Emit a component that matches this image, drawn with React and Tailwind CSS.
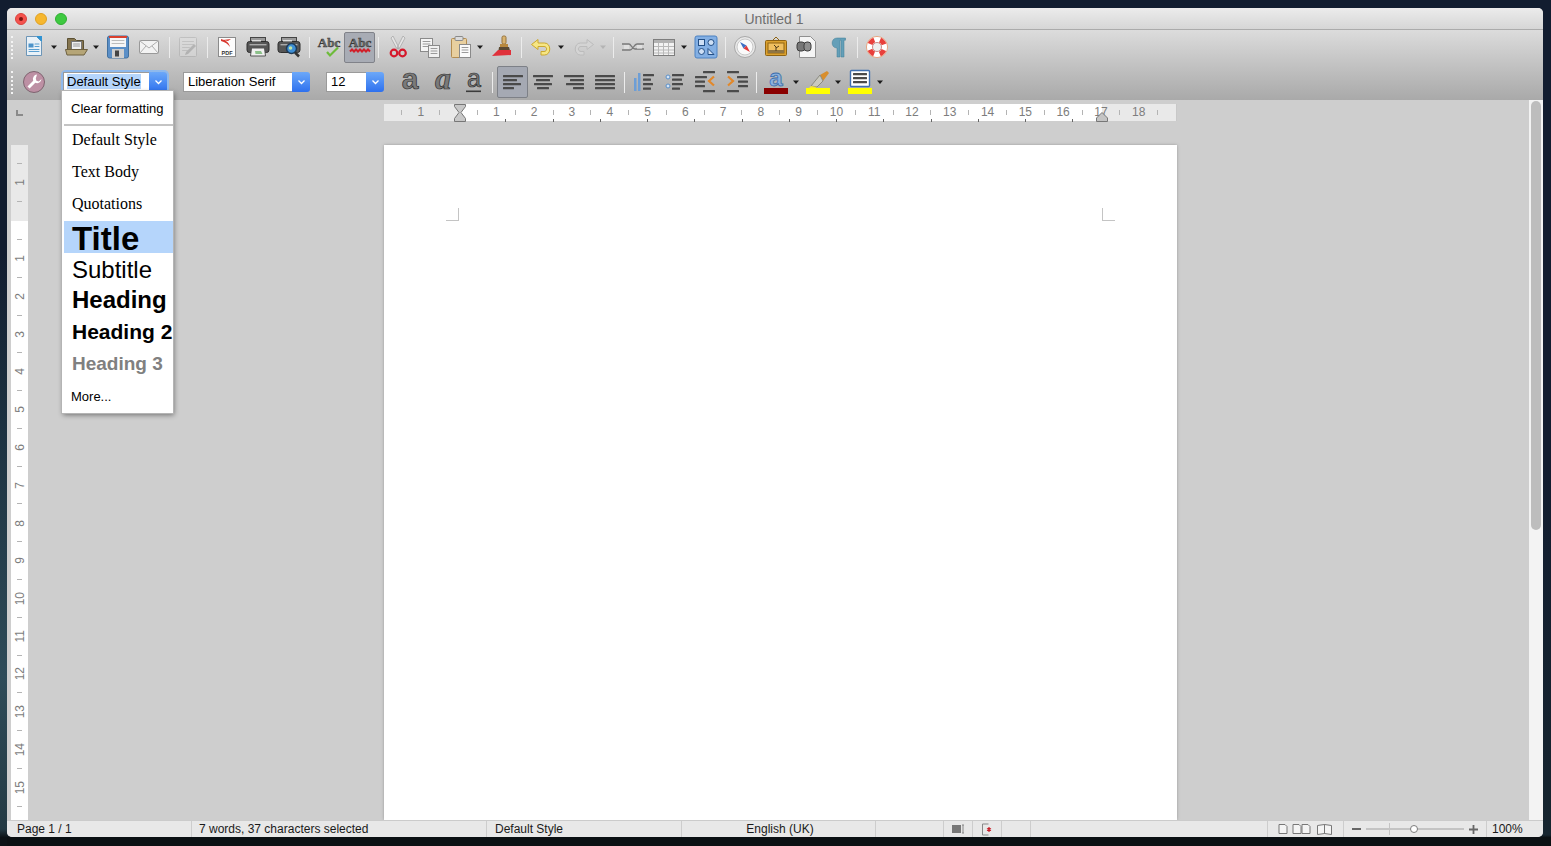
import React from "react";

const Ico = ({ c = "", children }) => (
  <svg width="24" height="24" viewBox="0 0 24 24" className={`shrink-0 overflow-visible ${c}`}>{children}</svg>
);
const Arrow = ({ c = "", grey }) => (
  <svg width="8" height="8" viewBox="0 0 8 8" className={`shrink-0 ${c}`}>
    <path d="M1 2.5h6L4 6z" fill={grey ? "#b4b4b4" : "#1c1c1c"} />
  </svg>
);
const Sep = ({ c = "" }) => <div className={`w-px h-[21px] shrink-0 bg-[#ececec] ${c}`} />;
const Grip = () => (
  <div className="ml-[4px] w-[3px] h-[23px] shrink-0 border-l-2 border-dotted border-[#f4f4f4]" />
);

const Doc = ({ x, y, w, h, f = "#fff", s = "#8a8a8a" }) => (
  <rect x={x} y={y} width={w} height={h} fill={f} stroke={s} />
);
const L = ({ items, fill = "#4a4a4a", h = 2.2 }) => (
  <>
    {items.map(([x, y, w], i) => (
      <rect key={i} x={x} y={y} width={w} height={h} fill={fill} rx="0.5" />
    ))}
  </>
);

const Abc = () => (
  <text x="12" y="12" textAnchor="middle" fontSize="13" fontWeight="700" fontFamily="Liberation Serif" fill="#6c6e6c" stroke="#383838" strokeWidth="0.5">Abc</text>
);

const New = ({ c }) => (
  <Ico c={c}>
    <path d="M4.5 1.5h10l5 5v14h-15z" fill="#e9f1f7" stroke="#6c95b7" />
    <path d="M14 1h6v6z" fill="#2f93d3" />
    <rect x="6.5" y="8.5" width="5" height="4" fill="#4d93c9" />
    <L fill="#5a9fd0" h="1" items={[[12.5, 8.5, 5], [12.5, 11, 5], [6.5, 14, 11], [6.5, 16, 11]]} />
  </Ico>
);
const Open = ({ c }) => (
  <Ico c={c}>
    <path d="M3.5 3.5h7l2 2h7v10h-16z" fill="#85754f" stroke="#5b5033" />
    <rect x="7.5" y="6.5" width="10" height="8" fill="#efefef" stroke="#777" />
    <L fill="#999" h="1" items={[[9, 8.5, 7], [9, 10.5, 7]]} />
    <path d="M1.5 14.5h22l-3.5 5.5H3z" fill="#b5a577" stroke="#6d6040" />
  </Ico>
);
const Save = ({ c }) => (
  <Ico c={c}>
    <rect x="1.5" y="1" width="21" height="22" rx="2" fill="#5b8fc7" stroke="#41709f" />
    <rect x="3" y="1" width="18" height="2" fill="#d9402e" />
    <rect x="4" y="3" width="16" height="9" fill="#f6f6f6" />
    <L fill="#bcbcbc" h="1" items={[[5.5, 5, 13], [5.5, 8, 13]]} />
    <rect x="6" y="14" width="12" height="9" fill="#cfcfcf" />
    <rect x="9" y="15.5" width="4" height="6" fill="#444" />
  </Ico>
);
const Mail = ({ c }) => (
  <Ico c={c}>
    <rect x="2.5" y="5.5" width="19" height="13" rx="1" fill="#f3f3f3" stroke="#999" />
    <path d="M3 6l9 7 9-7M3 18l6-7M21 18l-6-7" fill="none" stroke="#aeaeae" />
  </Ico>
);
const Edit = ({ c }) => (
  <Ico c={c}>
    <g opacity="0.3">
      <rect x="3.5" y="2.5" width="17" height="19" rx="1" fill="#e8e8e8" stroke="#8f8f8f" />
      <L fill="#a0a0a0" h="1" items={[[6, 6, 12], [6, 9, 12], [6, 12, 8], [6, 15, 6]]} />
      <path d="M10 17l8-8 2 2-8 8-3 1z" fill="#777" />
    </g>
  </Ico>
);
const Pdf = ({ c }) => (
  <Ico c={c}>
    <rect x="3.5" y="2.5" width="17" height="19" fill="#fdfdfd" stroke="#8b8b8b" />
    <path d="M6 4c4 1 8 3 9 8-2-3-5-5-9-6zM8 5l8-1-3 2z" fill="#d8372d" />
    <text x="12" y="19.5" textAnchor="middle" fontSize="5.5" fontWeight="700" fontFamily="Liberation Sans" fill="#333">PDF</text>
  </Ico>
);
const Printer = () => (
  <>
    <rect x="4.5" y="2.5" width="15" height="6" fill="#9a9a9a" stroke="#444" />
    <rect x="1" y="6.5" width="22" height="11" rx="2.5" fill="#555" stroke="#2e2e2e" />
    <rect x="6" y="5" width="9" height="1.5" fill="#ddd" />
    <rect x="3.5" y="9" width="17" height="1.4" fill="#aaa" />
  </>
);
const Print = ({ c }) => (
  <Ico c={c}>
    <Printer />
    <path d="M5.5 13h13l1 8h-15z" fill="#f0f0f0" stroke="#555" />
    <path d="M9 16h6l1.5 3h-7z" fill="#8cc18a" />
  </Ico>
);
const Preview = ({ c }) => (
  <Ico c={c}>
    <Printer />
    <circle cx="14.5" cy="13.5" r="5" fill="#3e8ed4" stroke="#1f3a55" strokeWidth="1.5" />
    <circle cx="13.5" cy="13" r="1.8" fill="#bfe5a8" />
    <path d="M18 17.5l4 4" stroke="#333" strokeWidth="2.5" />
  </Ico>
);
const Spell = ({ c }) => (
  <Ico c={c}>
    <Abc />
    <path d="M10 17l3 3.5 8-8" fill="none" stroke="#6dbb3a" strokeWidth="2.2" />
  </Ico>
);
const AutoSpell = () => (
  <div className="ml-[3px] w-[31px] h-[31px] shrink-0 flex items-center justify-center rounded-[2px] bg-[#a8acb5] border border-[#808289]">
    <Ico>
      <Abc />
      <path d="M2 16.5l2-2 2 2 2-2 2 2 2-2 2 2 2-2 2 2 2-2 2 2" fill="none" stroke="#d11f2a" strokeWidth="2" />
    </Ico>
  </div>
);
const Scissors = ({ c }) => (
  <Ico c={c}>
    <path d="M7 1l6 12-2 1-6-11zM17 1l-6 12 2 1 6-11z" fill="#e4e4e4" stroke="#a2a2a2" strokeWidth="0.7" />
    <circle cx="8" cy="18" r="3.3" fill="none" stroke="#d5182b" strokeWidth="2.2" />
    <circle cx="16.5" cy="18" r="3.3" fill="none" stroke="#d5182b" strokeWidth="2.2" />
  </Ico>
);
const Copy = ({ c }) => (
  <Ico c={c}>
    <Doc x={3.5} y={3.5} w={12} h={13} f="#f5f5f5" />
    <L fill="#9a9a9a" h="1" items={[[5.5, 6, 8], [5.5, 8.5, 8], [5.5, 11, 6]]} />
    <Doc x={11.5} y={10.5} w={11} h={12} f="#f0f0f0" />
    <L fill="#9a9a9a" h="1" items={[[13.5, 13, 7], [13.5, 15.5, 7], [13.5, 18, 7]]} />
  </Ico>
);
const Paste = ({ c }) => (
  <Ico c={c}>
    <rect x="2.5" y="3.5" width="15" height="19" rx="1" fill="#e8cf9f" stroke="#b38c50" />
    <rect x="6" y="1.5" width="8" height="4" rx="1" fill="#dbdbdb" stroke="#8a8a8a" />
    <Doc x={10.5} y={9.5} w={11} h={13} f="#fafafa" />
    <L fill="#9a9a9a" h="1" items={[[12.5, 12, 7], [12.5, 14.5, 7], [12.5, 17, 7]]} />
  </Ico>
);
const Brush = ({ c }) => (
  <Ico c={c}>
    <rect x="11" y="1" width="4" height="8" rx="1.5" fill="#d9b36f" stroke="#94723a" />
    <rect x="9" y="9" width="8" height="3" fill="#b8893f" />
    <path d="M8 12h10l2 7H7z" fill="#5b4a33" />
    <path d="M1 21l6-6h13v5z" fill="#e0303a" />
  </Ico>
);
const UndoPath = "M9 4.5L2.5 9.5 9 14.5V11.5h6c3.5 0 3.5 5 0 5h-3v3.5h3.5c7 0 7-12 0-12H9z";
const Undo = ({ c }) => (
  <Ico c={c}>
    <path d={UndoPath} fill="#f6e684" stroke="#cba82e" />
  </Ico>
);
const Redo = ({ c }) => (
  <Ico c={c}>
    <path d={UndoPath} transform="matrix(-1 0 0 1 24 0)" fill="#d4d4d4" stroke="#bcbcbc" />
  </Ico>
);
const Link = ({ c }) => (
  <Ico c={c}>
    <path d="M1 9h7c2 0 3 5 6 5h9M1 15h8c3 0 4-6 7-6h7" fill="none" stroke="#7a7a7a" strokeWidth="1.3" />
    <path d="M3 11h5M3 13h5M16 11h5M16 13h5" fill="none" stroke="#f0f0f0" />
  </Ico>
);
const Table = ({ c }) => (
  <Ico c={c}>
    <rect x="1.5" y="4.5" width="21" height="16" fill="#f2f2f2" stroke="#7d7d7d" />
    <rect x="2" y="5" width="20" height="3" fill="#b2b2b2" />
    <path d="M2 11.5h20M2 15h20M2 18h20M6.5 8v12M11.5 8v12M16.5 8v12" stroke="#b8b8b8" fill="none" />
  </Ico>
);
const Shapes = ({ c }) => (
  <Ico c={c}>
    <rect x="1" y="1" width="22" height="22" rx="2" fill="#83afe3" stroke="#4d82c2" />
    <rect x="4.5" y="4.5" width="6" height="6" fill="#cfe0f5" stroke="#234f86" />
    <circle cx="17" cy="7.5" r="3" fill="#cfe0f5" stroke="#234f86" />
    <circle cx="7.5" cy="16.5" r="3" fill="#cfe0f5" stroke="#234f86" />
    <path d="M14 19.5v-6l6 6z" fill="#cfe0f5" stroke="#234f86" />
  </Ico>
);
const Compass = ({ c }) => (
  <Ico c={c}>
    <circle cx="12" cy="12" r="10.5" fill="#e8e8e8" stroke="#a8a8a8" />
    <circle cx="12" cy="12" r="8" fill="#fafafa" stroke="#c8c8c8" />
    <path d="M7 7l6.5 3.5-3 3z" fill="#3f6fc4" />
    <path d="M17 17l-6.5-3.5 3-3z" fill="#e23b3b" />
  </Ico>
);
const Gallery = ({ c }) => (
  <Ico c={c}>
    <path d="M8 6l4-4 4 4" fill="none" stroke="#8f6414" />
    <rect x="1.5" y="5.5" width="21" height="15" rx="1" fill="#dba12f" stroke="#8f6414" />
    <rect x="4" y="8" width="16" height="10" fill="#f0c060" stroke="#8f6414" />
    <path d="M4 15h16v3H4z" fill="#8f7442" />
    <path d="M12 16v-4l-2-2M12 13l3-2" fill="none" stroke="#4d3a1a" />
  </Ico>
);
const Data = ({ c }) => (
  <Ico c={c}>
    <path d="M5.5 1.5h11l5 5v16h-16z" fill="#f5f5f5" stroke="#909090" />
    <rect x="3" y="7" width="8" height="9" rx="3" fill="#777" stroke="#3e3e3e" />
    <rect x="10" y="7" width="7" height="9" rx="3" fill="#8f8f8f" stroke="#3e3e3e" />
  </Ico>
);
const Pilcrow = ({ c }) => (
  <Ico c={c}>
    <path d="M11 3H19.5v2.2H18V22h-3V5.2h-1V22h-3V13C4.5 13 4.5 3 11 3z" fill="#649fb8" stroke="#3f7c95" strokeWidth="0.5" />
  </Ico>
);
const Help = ({ c }) => (
  <Ico c={c}>
    <circle cx="12" cy="12" r="10.5" fill="#fbe9dd" stroke="#e8a27c" />
    <circle cx="12" cy="12" r="7.5" fill="none" stroke="#fff" strokeWidth="5" />
    <circle cx="12" cy="12" r="7.5" fill="none" stroke="#e8403c" strokeWidth="5" strokeDasharray="6 5.78" strokeDashoffset="3" transform="rotate(45 12 12)" />
    <circle cx="12" cy="12" r="4.5" fill="#eee" stroke="#c88" />
  </Ico>
);

const Wrench = ({ c }) => (
  <Ico c={c}>
    <circle cx="12" cy="12" r="10.5" fill="#bd90a4" stroke="#7e6470" />
    <path d="M15 4.5a4.5 4.5 0 0 0-3.8 6.2l-5.7 5.7 2.1 2.1 5.7-5.7A4.5 4.5 0 0 0 19.5 9l-2.7 2.4-2.4-.6-.6-2.4z" fill="#fff" />
  </Ico>
);
const LetterA = ({ c, fam = "Liberation Sans", style = "normal", under, w = "700", size = 30, y = 19 }) => (
  <Ico c={c}>
    <text x="12" y={y} textAnchor="middle" fontSize={size} fontFamily={fam} fontStyle={style} fontWeight={w} fill="#7a7a7a" stroke="#2c2c2c" strokeWidth="0.7">a</text>
    {under && <rect x="4" y="20.5" width="15" height="1.6" fill="#3c3c3c" />}
  </Ico>
);
const Align = ({ c, items }) => (
  <Ico c={c}>
    <L items={items} />
  </Ico>
);
const AlignToggle = () => (
  <div className="ml-[4px] w-[31px] h-[32px] shrink-0 flex items-center justify-center rounded-[2px] bg-[#a5a9b3] border border-[#7d8087]">
    <Ico>
      <L items={[[2, 5, 20], [2, 9, 14], [2, 13, 18], [2, 17, 11]]} />
    </Ico>
  </div>
);
const Numbering = ({ c }) => (
  <Ico c={c}>
    <rect x="2" y="8" width="2.5" height="13" fill="#6d9ed6" />
    <rect x="6" y="3" width="2.5" height="18" fill="#6d9ed6" />
    <L items={[[11, 4, 11], [11, 8.5, 8], [11, 13, 10], [11, 17.5, 8]]} />
  </Ico>
);
const Bullets = ({ c }) => (
  <Ico c={c}>
    <circle cx="5" cy="7" r="2" fill="#d5e4f5" stroke="#5b8fc7" />
    <circle cx="5" cy="16" r="2" fill="#d5e4f5" stroke="#5b8fc7" />
    <L items={[[9, 4, 12], [9, 8.5, 10], [9, 13, 11], [9, 17.5, 8]]} />
  </Ico>
);
const Outdent = ({ c }) => (
  <Ico c={c}>
    <L items={[[9, 1, 12], [1, 6, 12], [1, 10.5, 10], [1, 15, 10], [9, 20, 12]]} />
    <path d="M20 6.5l-5 4.5 5 4.5" fill="none" stroke="#e2882a" strokeWidth="2.2" />
  </Ico>
);
const Indent = ({ c }) => (
  <Ico c={c}>
    <L items={[[2, 1, 12], [12, 6, 11], [13, 10.5, 10], [13, 15, 10], [2, 20, 12]]} />
    <path d="M3 6.5l5 4.5-5 4.5" fill="none" stroke="#e2882a" strokeWidth="2.2" />
  </Ico>
);
const FontColor = ({ c }) => (
  <Ico c={c}>
    <text x="12" y="16" textAnchor="middle" fontSize="24" fontWeight="700" fontFamily="Liberation Sans" fill="#8bb1de" stroke="#3a6cac" strokeWidth="0.8">a</text>
    <rect x="0" y="18" width="24" height="6" fill="#8a0000" />
  </Ico>
);
const Highlight = ({ c }) => (
  <Ico c={c}>
    <path d="M14 5l7-4 2 2-6 8z" fill="#d88e2d" />
    <path d="M14 5l3 6-6 6-6-1z" fill="#c9c9c0" stroke="#8a8a80" />
    <path d="M5 16l6 1-2 1H3z" fill="#f5e33a" />
    <rect x="0" y="18" width="24" height="6" fill="#ffff00" />
  </Ico>
);
const BgColor = ({ c }) => (
  <Ico c={c}>
    <rect x="2.5" y="0.5" width="19" height="16" rx="1" fill="#fff" stroke="#3f6fb0" strokeWidth="1.4" />
    <L items={[[5, 3, 14], [5, 7, 14], [5, 11, 14]]} />
    <rect x="0" y="18" width="24" height="6" fill="#ffff00" />
  </Ico>
);

const Combo = ({ w, focus, pad = "pl-[4px]", children }) => (
  <div className={`${w} h-[20px] shrink-0 flex rounded-[3px] text-[13px] text-black leading-[18px] ${focus}`}>
    <div className={`flex-1 min-w-0 bg-white border border-[#9a9a9a] border-r-0 whitespace-nowrap overflow-hidden ${pad}`}>{children}</div>
    <div className="w-[18px] shrink-0 flex items-center justify-center rounded-r-[3px] bg-gradient-to-b from-[#6ca8f9] to-[#2e70ee]">
      <svg width="9" height="6" viewBox="0 0 9 6"><path d="M1.5 1.5l3 3 3-3" fill="none" stroke="#fff" strokeWidth="1.3" /></svg>
    </div>
  </div>
);

const HIdx = Array.from({ length: 41 }, (_, i) => i);
const VIdx = Array.from({ length: 35 }, (_, i) => i);
const label = (i) => {
  if (i % 2 === 0) return null;
  if (i === 1) return "1";
  return String((i - 3) / 2);
};
const TabStops = Array.from({ length: 13 }, (_, i) => i);

const MenuRow = ({ c, children }) => (
  <div className={`h-[32px] pl-[8px] flex items-center whitespace-nowrap text-black ${c}`}>{children}</div>
);

const StatusCell = ({ c, children }) => (
  <div className={`h-full shrink-0 flex items-center border-l border-[#cdcdcd] ${c}`}>{children}</div>
);

const MiniDoc = ({ x }) => <path d={`M${x} 1.5h6l2 2v7h-8z`} fill="#f4f4f4" stroke="#777" />;

export default function App() {
  return (
    <div className="w-[1551px] h-[846px] overflow-hidden bg-no-repeat bg-[size:7px_100%,100%_100%] bg-[linear-gradient(to_bottom,#121d30_0%,#121d30_30%,#1c3140_50%,#2e4b58_80%,#243a44_98%,#0c1216_99%),linear-gradient(to_bottom,#121d30_0%,#121d30_55%,#16252f_98.7%,#0b1013_99%)] pl-[7px] pt-[8px] [font-family:'Liberation_Sans',sans-serif]">
      <div className="relative w-[1536px] h-[829px] rounded-[5px] overflow-hidden flex flex-col bg-[#cecece]">
        {/* Title bar */}
        <div className="h-[22px] shrink-0 grid grid-cols-3 items-center bg-gradient-to-b from-[#ececec] to-[#d6d6d6] border-b border-[#ababab]">
          <div className="flex items-center gap-[8px] pl-[8px]">
            <div className="w-[12px] h-[12px] rounded-full bg-[#f5534e] border border-[#d9433e] flex items-center justify-center">
              <div className="w-[4px] h-[4px] rounded-full bg-[#7d1512]" />
            </div>
            <div className="w-[12px] h-[12px] rounded-full bg-[#f6b72f] border border-[#dfa023]" />
            <div className="w-[12px] h-[12px] rounded-full bg-[#3ec940] border border-[#2fae32]" />
          </div>
          <div className="text-center text-[14px] text-[#6e6e6e] leading-none pt-[1px] pr-[2px]">Untitled 1</div>
          <div />
        </div>

        {/* Toolbars */}
        <div className="h-[70px] shrink-0 bg-gradient-to-b from-[#dcdcdc] to-[#a9a9a9]">
          <div className="h-[35px] pb-[1px] flex items-center">
            <Grip />
            <New c="ml-[8px]" />
            <Arrow c="ml-[4px]" />
            <Open c="ml-[6px]" />
            <Arrow c="ml-[4px]" />
            <Save c="ml-[6px]" />
            <Mail c="ml-[7px]" />
            <Sep c="ml-[8px]" />
            <Edit c="ml-[6px]" />
            <Sep c="ml-[7px]" />
            <Pdf c="ml-[7px]" />
            <Print c="ml-[7px]" />
            <Preview c="ml-[7px]" />
            <Sep c="ml-[8px]" />
            <Spell c="ml-[7px]" />
            <AutoSpell />
            <Sep c="ml-[3px]" />
            <Scissors c="ml-[7px]" />
            <Copy c="ml-[7px]" />
            <Paste c="ml-[8px]" />
            <Arrow c="ml-[3px]" />
            <Brush c="ml-[7px]" />
            <Sep c="ml-[6px]" />
            <Undo c="ml-[7px]" />
            <Arrow c="ml-[4px]" />
            <Redo c="ml-[7px]" />
            <Arrow c="ml-[3px]" grey />
            <Sep c="ml-[6px]" />
            <Link c="ml-[7px]" />
            <Table c="ml-[7px]" />
            <Arrow c="ml-[4px]" />
            <Shapes c="ml-[6px]" />
            <Sep c="ml-[7px]" />
            <Compass c="ml-[7px]" />
            <Gallery c="ml-[7px]" />
            <Data c="ml-[6px]" />
            <Pilcrow c="ml-[8px]" />
            <Sep c="ml-[7px]" />
            <Help c="ml-[7px]" />
          </div>
          <div className="h-[35px] pb-[1px] flex items-center">
            <Grip />
            <Wrench c="ml-[8px]" />
            <Combo w="ml-[17px] w-[104px]" pad="pl-[3px]" focus="shadow-[0_0_0_2px_#8fb9ec]">
              <span className="bg-[#b5d5fb]">Default Style</span>
            </Combo>
            <Combo w="ml-[16px] w-[127px]">Liberation Serif</Combo>
            <Combo w="ml-[16px] w-[58px]">12</Combo>
            <LetterA c="ml-[14px]" />
            <LetterA c="ml-[9px]" style="italic" fam="Liberation Serif" size={32} />
            <LetterA c="ml-[7px]" under w="400" size={25} y={17} />
            <Sep c="ml-[6px]" />
            <AlignToggle />
            <Align c="ml-[3px]" items={[[2, 5, 20], [5, 9, 14], [3, 13, 18], [6, 17, 12]]} />
            <Align c="ml-[7px]" items={[[2, 5, 20], [8, 9, 14], [4, 13, 18], [11, 17, 11]]} />
            <Align c="ml-[7px]" items={[[2, 5, 20], [2, 9, 20], [2, 13, 20], [2, 17, 20]]} />
            <Sep c="ml-[7px]" />
            <Numbering c="ml-[7px]" />
            <Bullets c="ml-[7px]" />
            <Outdent c="ml-[7px]" />
            <Indent c="ml-[7px]" />
            <Sep c="ml-[7px]" />
            <FontColor c="ml-[7px]" />
            <Arrow c="ml-[4px]" />
            <Highlight c="ml-[6px]" />
            <Arrow c="ml-[4px]" />
            <BgColor c="ml-[6px]" />
            <Arrow c="ml-[4px]" />
          </div>
        </div>

        {/* Workspace */}
        <div className="flex-1 min-h-0 flex">
          <div className="flex-1 min-w-0 flex flex-col">
            <div className="h-[45px] shrink-0 flex">
              <div className="w-[377px] shrink-0 pl-[9px] pt-[10px]">
                <div className="w-[7px] h-[6px] border-l-2 border-b-2 border-[#8a8a8a]" />
              </div>
              <div className="relative mt-[4px] w-[793px] h-[17px] pl-[8.5px] pb-[1px] flex items-center bg-[linear-gradient(to_right,#e9e9e9_75px,#ffffff_75px,#ffffff_718px,#e9e9e9_718px)] border-r border-[#c8c8c8]">
                {HIdx.map((i) => (
                  <div key={i} className="w-[18.9px] shrink-0 flex justify-center text-[12px] leading-none text-[#7d7d7d]">
                    {i === 3 ? null : label(i) ?? <div className="w-px h-[5px] bg-[#b4b4b4]" />}
                  </div>
                ))}
                <div className="absolute left-[75px] bottom-[-1px] flex">
                  {TabStops.map((i) => (
                    <div key={i} className="w-[47.25px] h-[3px] border-r border-[#666]" />
                  ))}
                </div>
                <svg width="14" height="18" viewBox="0 0 14 18" className="absolute left-[69px] top-0">
                  <path d="M1.5 0.5h11v2L8 8.5l4.5 6v3h-11v-3L6 8.5 1.5 2.5z" fill="#c8c8c8" stroke="#777" />
                </svg>
                <svg width="14" height="10" viewBox="0 0 14 10" className="absolute left-[711px] top-[8px]">
                  <path d="M7 0.5l5.5 5.5v3.5h-11V6z" fill="#c4c4c4" stroke="#777" />
                </svg>
              </div>
            </div>
            <div className="flex-1 min-h-0 flex">
              <div className="ml-[4px] w-[17px] h-full shrink-0 overflow-hidden pt-[9.5px] bg-[linear-gradient(to_bottom,#e9e9e9_76px,#ffffff_76px)]">
                {VIdx.map((i) => (
                  <div key={i} className="h-[18.9px] flex items-center justify-center text-[12px] leading-none text-[#7d7d7d]">
                    {i === 3 ? null : label(i) ? (
                      <span className="[writing-mode:vertical-rl] rotate-180">{label(i)}</span>
                    ) : (
                      <div className="w-[5px] h-px bg-[#b4b4b4]" />
                    )}
                  </div>
                ))}
              </div>
              <div className="ml-[356px] w-[793px] h-full shrink-0 bg-white shadow-[0_0_3px_#9a9a9a] flex justify-between px-[62px] pt-[63px]">
                <div className="w-[13px] h-[13px] border-r border-b border-[#c4c4c4]" />
                <div className="w-[13px] h-[13px] border-l border-b border-[#c4c4c4]" />
              </div>
            </div>
          </div>
          <div className="w-[14px] shrink-0 bg-[#f3f3f3] pl-[2px] pr-[2px] pt-[1px]">
            <div className="h-[429px] rounded-full bg-[#bdbdbd]" />
          </div>
        </div>

        {/* Status bar */}
        <div className="h-[17px] shrink-0 flex items-center bg-[#e8e8e8] border-t border-[#cbcbcb] text-[12px] text-[#1a1a1a] leading-none">
          <div className="w-[184px] shrink-0 pl-[10px]">Page 1 / 1</div>
          <StatusCell c="w-[295px] pl-[7px]">7 words, 37 characters selected</StatusCell>
          <StatusCell c="w-[195px] pl-[8px]">Default Style</StatusCell>
          <StatusCell c="w-[194px] justify-center pl-[3px]">English (UK)</StatusCell>
          <StatusCell c="w-[68px]" />
          <StatusCell c="w-[29px] justify-center">
            <svg width="14" height="12" viewBox="0 0 14 12">
              <rect x="1" y="2" width="9" height="8" fill="#777" />
              <path d="M11 2h2M12 2v8M11 10h2" stroke="#888" fill="none" />
            </svg>
          </StatusCell>
          <StatusCell c="w-[29px] justify-center">
            <svg width="12" height="13" viewBox="0 0 12 13">
              <path d="M1.5 1h6M1.5 1v11h6" stroke="#888" fill="none" />
              <path d="M8 4v5M6 5.5l4 2M10 5.5l-4 2" stroke="#c81e28" fill="none" strokeWidth="1.2" />
            </svg>
          </StatusCell>
          <StatusCell c="w-[29px]" />
          <StatusCell c="w-[237px]" />
          <StatusCell c="w-[76px] pl-[10px]">
            <svg width="56" height="12" viewBox="0 0 56 12">
              <MiniDoc x={1} />
              <MiniDoc x={15} />
              <MiniDoc x={24} />
              <path d="M39.5 2.5l7-1v9l-7 1zM46.5 1.5l7 1v9l-7-1z" fill="#f4f4f4" stroke="#777" />
            </svg>
          </StatusCell>
          <StatusCell c="w-[143px] pl-[8px]">
            <div className="w-[9px] h-[2px] bg-[#666]" />
            <div className="relative w-[98px] h-[2px] ml-[5px] bg-[#c4c4c4]">
              <div className="absolute left-[23px] top-[-5px] w-px h-[12px] bg-[#c4c4c4]" />
              <div className="absolute left-[44px] top-[-3px] w-[8px] h-[8px] rounded-full bg-white border border-[#7d7d7d]" />
            </div>
            <svg width="9" height="9" viewBox="0 0 9 9" className="ml-[5px]"><path d="M0 4.5h9M4.5 0v9" stroke="#666" strokeWidth="1.8" /></svg>
          </StatusCell>
          <StatusCell c="w-[57px] pl-[5px]">100%</StatusCell>
        </div>

        {/* Style dropdown */}
        <div className="absolute left-[55px] top-[83px] w-[111px] h-[322px] bg-white pl-[2px] pt-[2px] shadow-[0_0_0_1px_#b4b4b4,1px_2px_5px_rgba(0,0,0,0.45)]">
          <MenuRow c="text-[13px] !pl-[7px]">Clear formatting</MenuRow>
          <div className="h-[2px] -mt-[1px] -mb-[1px] bg-[#c4c4c4]" />
          <div className="[font-family:'Liberation_Serif',serif] text-[16px]">
            <MenuRow c="pb-[2px]">Default Style</MenuRow>
            <MenuRow c="pb-[2px]">Text Body</MenuRow>
            <MenuRow c="pb-[2px]">Quotations</MenuRow>
          </div>
          <MenuRow c="bg-[#b5d5fb] text-[33px] font-bold pt-[4px]">Title</MenuRow>
          <MenuRow c="text-[24px] pt-[2px]">Subtitle</MenuRow>
          <MenuRow c="text-[24px] font-bold pb-[2px]">Heading</MenuRow>
          <MenuRow c="text-[21px] font-bold pb-[2px]">Heading 2</MenuRow>
          <MenuRow c="text-[19px] font-bold !text-[#808080] pb-[2px]">Heading 3</MenuRow>
          <MenuRow c="text-[13px] !pl-[7px]">More...</MenuRow>
        </div>
      </div>
    </div>
  );
}
